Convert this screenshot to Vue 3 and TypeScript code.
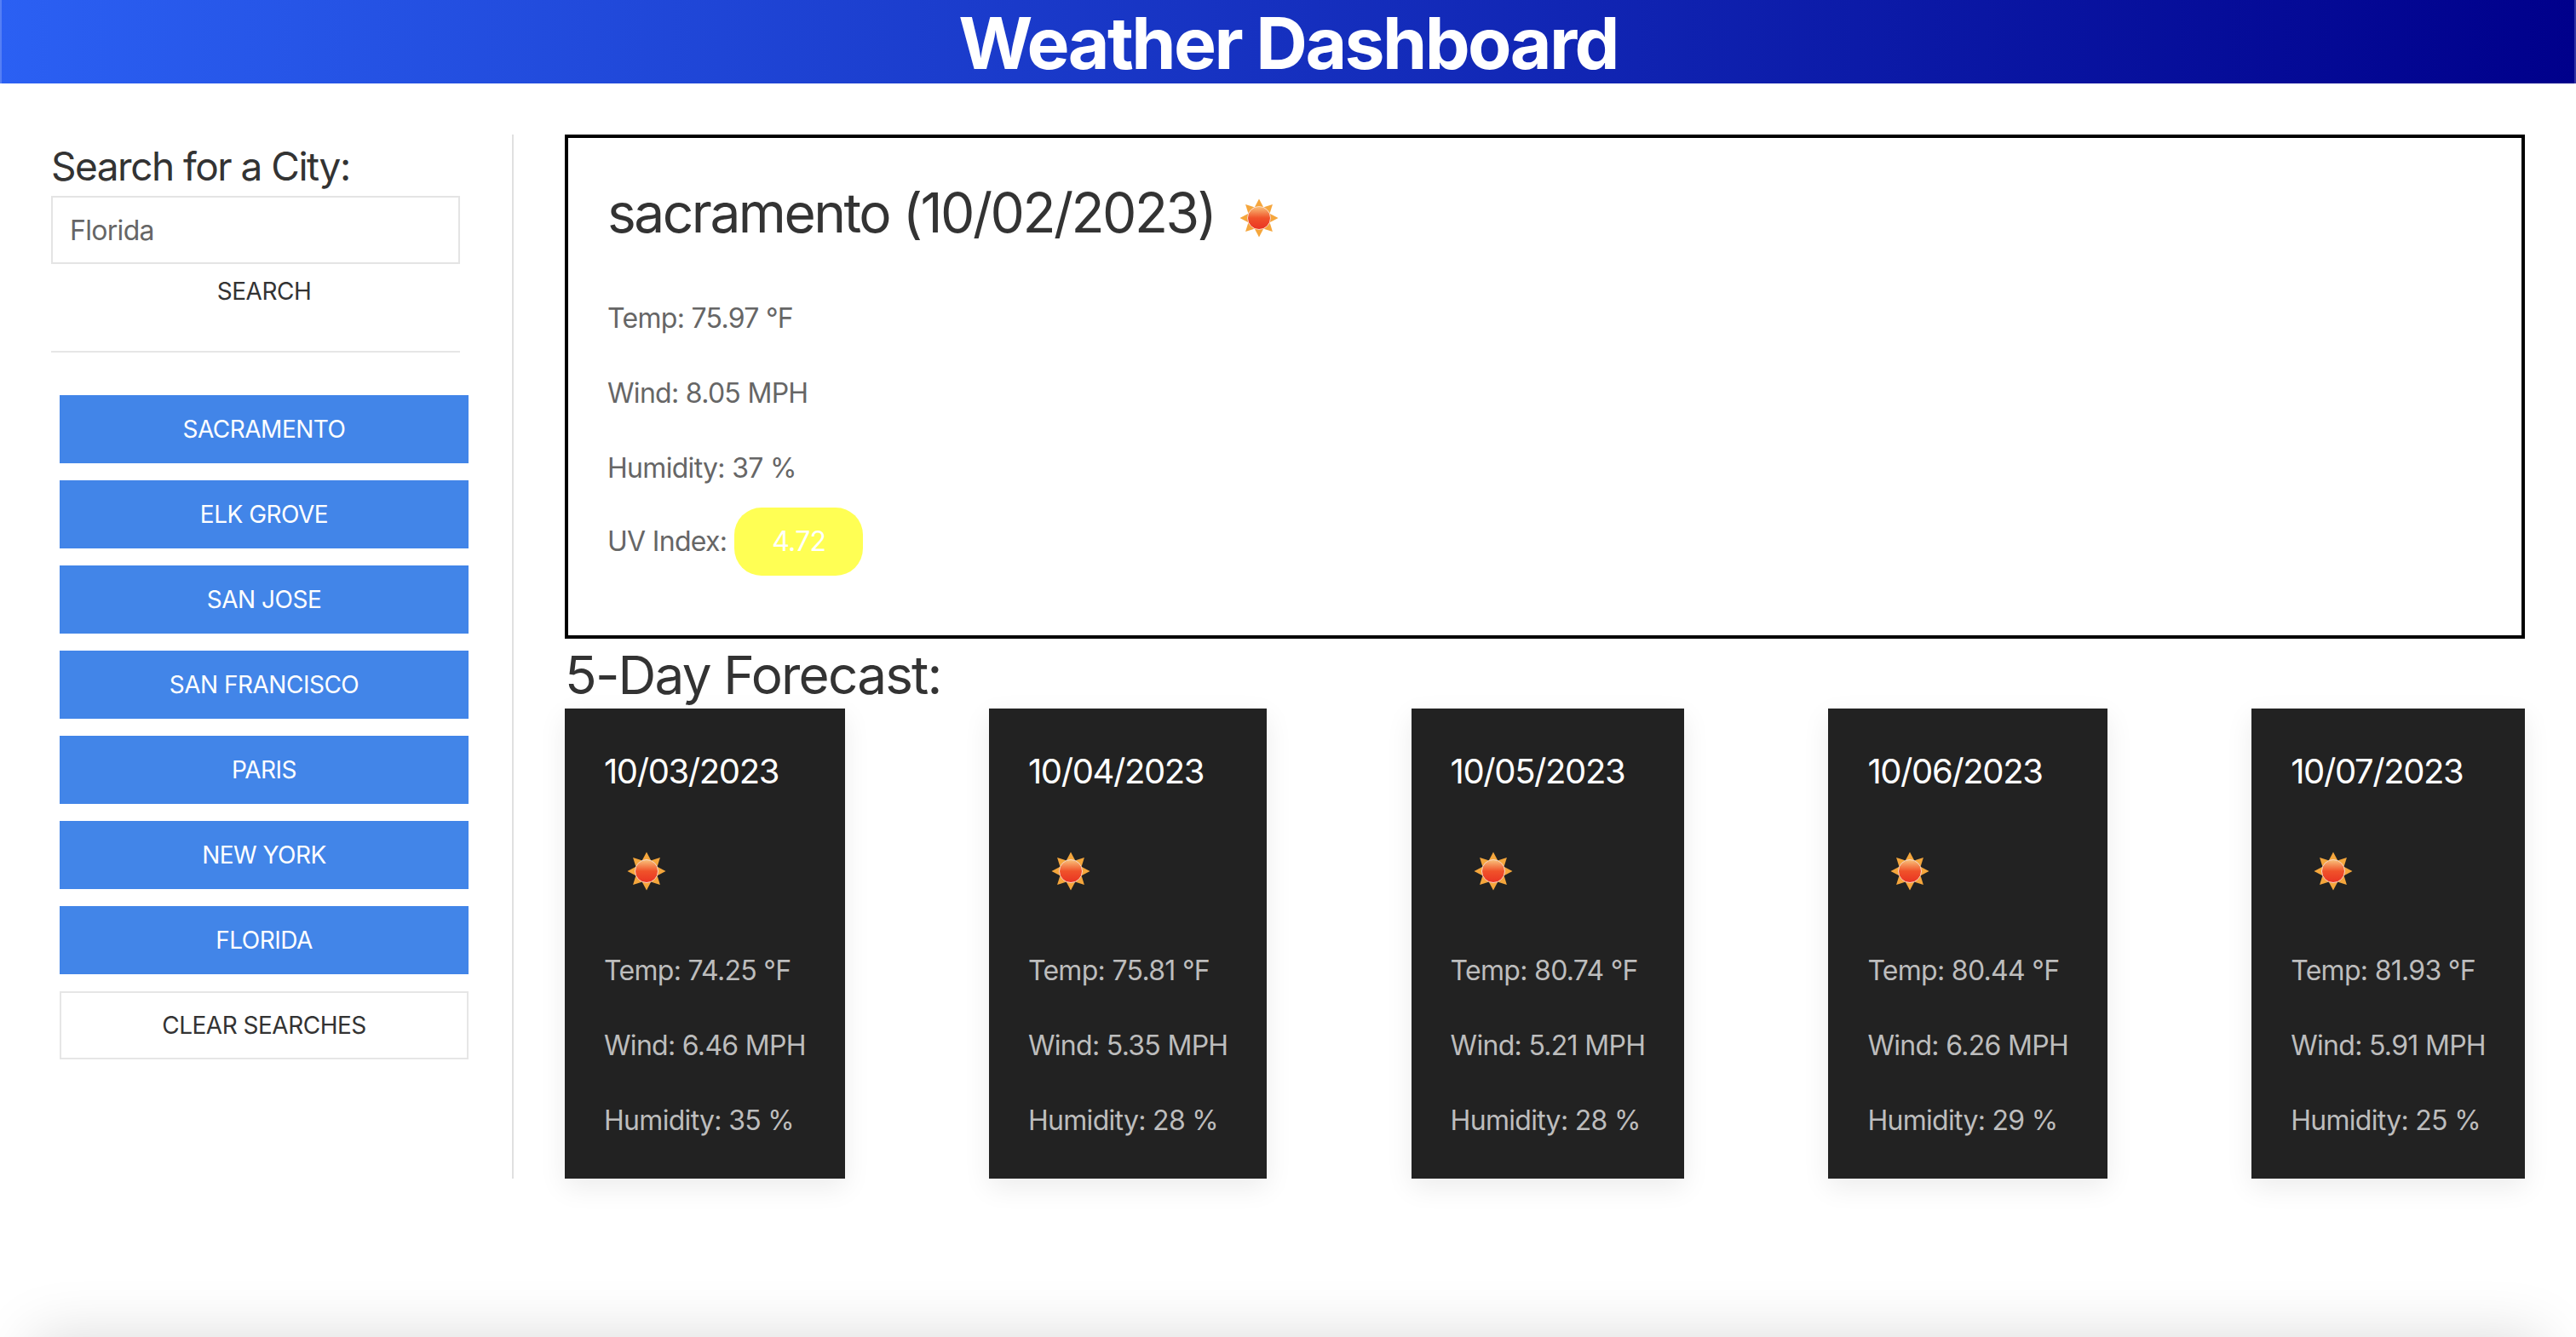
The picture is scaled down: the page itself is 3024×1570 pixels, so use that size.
<script setup lang="ts">
interface Forecast {
  date: string
  temp: string
  wind: string
  humidity: string
}

const cities: string[] = [
  'Sacramento',
  'Elk Grove',
  'San Jose',
  'San Francisco',
  'Paris',
  'New York',
  'Florida',
]

const forecast: Forecast[] = [
  { date: '10/03/2023', temp: '74.25', wind: '6.46', humidity: '35' },
  { date: '10/04/2023', temp: '75.81', wind: '5.35', humidity: '28' },
  { date: '10/05/2023', temp: '80.74', wind: '5.21', humidity: '28' },
  { date: '10/06/2023', temp: '80.44', wind: '6.26', humidity: '29' },
  { date: '10/07/2023', temp: '81.93', wind: '5.91', humidity: '25' },
]

const rayAngles: number[] = [0, 45, 90, 135, 180, 225, 270, 315]
</script>

<template>
  <div class="page">
    <header class="top-bar">
      <h1>Weather Dashboard</h1>
    </header>

    <main class="layout">
      <aside class="sidebar">
        <form class="search" @submit.prevent>
          <h5>Search for a City:</h5>
          <input class="city-input" type="text" value="Florida" />
          <button class="search-btn" type="button">Search</button>
        </form>
        <hr class="rule" />
        <div class="city-list">
          <button v-for="city in cities" :key="city" class="city-btn" type="button">{{ city }}</button>
          <button class="clear-btn" type="button">Clear Searches</button>
        </div>
      </aside>

      <section class="content">
        <div class="current">
          <div class="current-title">
            <h3>sacramento (10/02/2023)</h3>
            <svg class="sun" viewBox="0 0 100 100" aria-label="clear sky">
              <defs>
                <linearGradient id="sun-main" x1="0" y1="0" x2="0" y2="1">
                  <stop offset="0" stop-color="#f9c27a" />
                  <stop offset="0.5" stop-color="#f0522a" />
                  <stop offset="1" stop-color="#e93323" />
                </linearGradient>
              </defs>
              <polygon
                v-for="a in rayAngles"
                :key="a"
                points="45,37 50,27.5 55,37"
                fill="#f5a63c"
                :transform="`rotate(${a} 50 50)`"
              />
              <circle cx="50" cy="50" r="13.5" fill="url(#sun-main)" stroke="#fbd9c4" stroke-width="1" />
            </svg>
          </div>
          <p>Temp: 75.97 °F</p>
          <p>Wind: 8.05 MPH</p>
          <p>Humidity: 37 %</p>
          <p class="uv-row">UV Index: <span class="uv-badge">4.72</span></p>
        </div>

        <h4>5-Day Forecast:</h4>

        <div class="forecast-row">
          <div v-for="day in forecast" :key="day.date" class="day-card">
            <h5>{{ day.date }}</h5>
            <svg class="sun" viewBox="0 0 100 100" aria-label="clear sky">
              <polygon
                v-for="a in rayAngles"
                :key="a"
                points="45,37 50,27.5 55,37"
                fill="#f5a63c"
                :transform="`rotate(${a} 50 50)`"
              />
              <circle cx="50" cy="50" r="13.5" fill="url(#sun-main)" stroke="#fbd9c4" stroke-width="1" />
            </svg>
            <p>Temp: {{ day.temp }} °F</p>
            <p>Wind: {{ day.wind }} MPH</p>
            <p>Humidity: {{ day.humidity }} %</p>
          </div>
        </div>
      </section>
    </main>

    <div class="offscreen-bar"></div>
  </div>
</template>

<style>
html,
body {
  background: #fff;
}
</style>

<style scoped>
.page {
  font-family: Inter, "Liberation Sans", sans-serif;
  color: #333;
  min-height: 1570px;
  box-sizing: border-box;
  overflow: hidden;
}

.top-bar {
  box-sizing: border-box;
  height: 98px;
  background: linear-gradient(90deg, #2b60f3, #00008b);
  background-origin: border-box;
  border-left: 2px solid rgba(255, 255, 255, 0.2);
  border-right: 2px solid rgba(255, 255, 255, 0.2);
  text-align: center;
}

.top-bar h1 {
  margin: 0;
  font-size: 84px;
  line-height: 102px;
  font-weight: 700;
  letter-spacing: -2.6px;
  color: #fff;
}

.layout {
  display: flex;
  padding: 60px 60px 0 60px;
}

.sidebar {
  box-sizing: border-box;
  width: 543px;
  height: 1226px;
  border-right: 2px solid #e0e0e0;
  padding-right: 1px;
  flex-shrink: 0;
}

.search {
  width: 480px;
}

.search h5 {
  margin: 0 0 6px;
  padding-top: 8px;
  font-size: 46px;
  line-height: 58px;
  font-weight: 400;
  letter-spacing: -1.5px;
}

.city-input {
  display: block;
  box-sizing: border-box;
  width: 480px;
  height: 80px;
  border: 2px solid #e4e4e4;
  padding: 0 20px;
  font: inherit;
  font-size: 32px;
  letter-spacing: -0.7px;
  color: #666;
  outline: none;
  background: #fff;
}

.search-btn {
  display: block;
  width: 480px;
  margin-left: 10px;
  height: 64px;
  border: none;
  background: transparent;
  padding: 0;
  font: inherit;
  font-size: 28px;
  letter-spacing: -0.5px;
  color: #333;
  text-transform: uppercase;
}

.rule {
  width: 480px;
  margin: 38px 0 50px;
  border: none;
  border-top: 2px solid #e6e6e6;
}

.city-list {
  display: flex;
  flex-direction: column;
  gap: 20px;
  width: 480px;
  margin-left: 10px;
}

.city-btn,
.clear-btn {
  box-sizing: border-box;
  height: 80px;
  padding: 0;
  font: inherit;
  font-size: 28px;
  letter-spacing: -0.5px;
  text-transform: uppercase;
}

.city-btn {
  border: none;
  background: #4285e8;
  color: #fff;
}

.clear-btn {
  background: #fff;
  border: 2px solid #e6e6e6;
  color: #333;
}

.content {
  flex: 1;
  min-width: 0;
  margin-left: 60px;
  height: 1226px;
}

.current {
  box-sizing: border-box;
  height: 592px;
  border: 4px solid #000;
  padding: 44px 46px 0;
}

.current-title {
  display: flex;
  align-items: center;
  height: 100px;
  margin-bottom: 46px;
}

.current-title h3 {
  margin: 0 0 12px;
  font-size: 64px;
  font-weight: 400;
  letter-spacing: -2.5px;
  line-height: 100px;
}

.current p {
  margin: 0 0 44px;
  font-size: 32px;
  line-height: 44px;
  letter-spacing: -0.7px;
  color: #666;
}

.current p.uv-row {
  margin-top: -20px;
  display: flex;
  align-items: center;
  gap: 9px;
}

.uv-badge {
  box-sizing: border-box;
  width: 151px;
  height: 80px;
  border-radius: 32px;
  background: #ffff54;
  color: #fff;
  text-align: center;
  line-height: 80px;
}

.content h4 {
  margin: 0;
  height: 82px;
  font-size: 62px;
  line-height: 86px;
  font-weight: 400;
  letter-spacing: -1.8px;
}

.forecast-row {
  display: flex;
  justify-content: space-between;
}

.day-card {
  box-sizing: border-box;
  height: 552px;
  padding: 46px;
  background: #222;
  color: #bdbdbd;
  box-shadow: 0 10px 30px rgba(0, 0, 0, 0.08);
}

.day-card h5 {
  margin: 0;
  font-size: 40px;
  line-height: 56px;
  font-weight: 400;
  color: #fff;
  letter-spacing: -1.4px;
}

.day-card .sun {
  margin: 39px 0 45px;
}

.day-card p {
  margin: 0 0 44px;
  font-size: 32px;
  line-height: 44px;
  letter-spacing: -0.7px;
  white-space: nowrap;
}

.sun {
  display: block;
  width: 100px;
  height: 100px;
  flex-shrink: 0;
  filter: blur(0.5px);
}

.current-title .sun {
  margin-left: 2px;
}

.offscreen-bar {
  position: fixed;
  left: 40px;
  right: 40px;
  top: 1570px;
  height: 100px;
  box-shadow: 0 0 70px rgba(0, 0, 0, 0.15);
}
</style>
